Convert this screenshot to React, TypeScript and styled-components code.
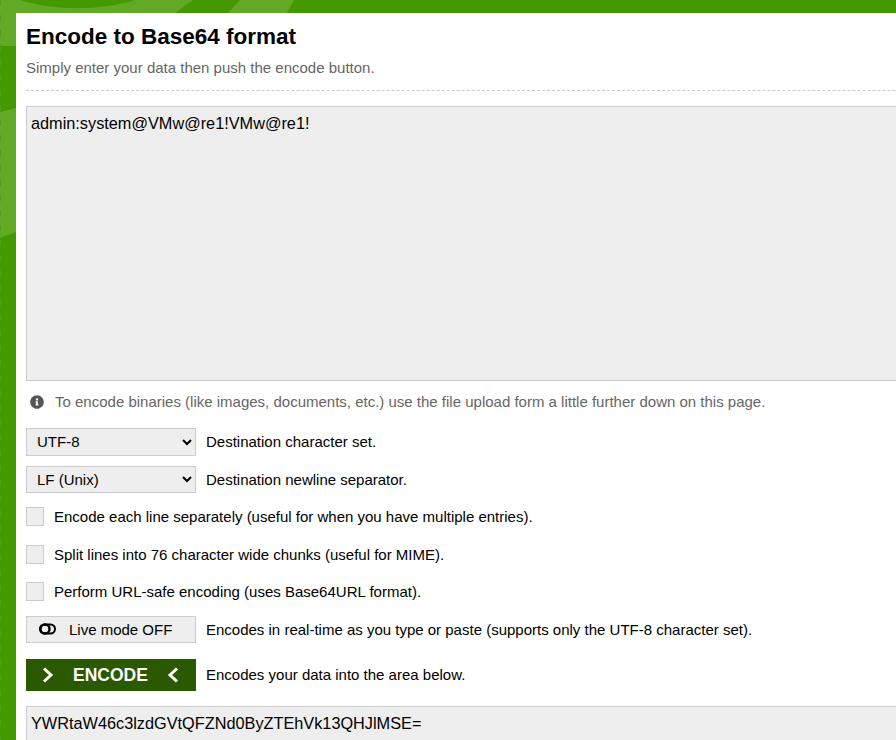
import React from "react";
import styled, { createGlobalStyle } from "styled-components";
import { FaInfoCircle } from "react-icons/fa";

const GlobalStyle = createGlobalStyle`
  html {
    background: #429900;
  }

  html, body {
    margin: 0;
    height: 740px;
    overflow: hidden;
    font-family: "Liberation Sans", Arial, sans-serif;
    color: #000;
  }
`;

const Backdrop = styled.svg`
  position: fixed;
  top: 0;
  left: 0;
  z-index: -1;
`;

const Panel = styled.main`
  width: 1100px;
  height: 800px;
  margin: 13px 0 0 16px;
  padding: 0 10px;
  background: #fff;
`;

const Title = styled.h1`
  margin: 0;
  padding-top: 9px;
  font-size: 22.5px;
  line-height: 30px;
  font-weight: 700;
`;

const Subtitle = styled.p`
  margin: 6px 0 0;
  font-size: 15px;
  line-height: 20px;
  color: #666;
`;

const Divider = styled.hr`
  margin: 12px 0 15px;
  border: 0;
  border-top: 1px dashed #ccc;
`;

const DataArea = styled.textarea<{ $height: number }>`
  display: block;
  width: 100%;
  height: ${(p) => p.$height}px;
  box-sizing: border-box;
  padding: 5px 4px;
  border: 1px solid #ccc;
  border-radius: 0;
  background: #eee;
  color: #000;
  font: 16.3px/22px "Liberation Sans", Arial, sans-serif;
  outline: none;
  resize: none;
  overflow: hidden;
`;

const Note = styled.p`
  display: flex;
  align-items: center;
  height: 19px;
  margin: 11px 0 17px;
  padding-left: 4px;
  font-size: 15px;
  color: #666;

  svg {
    width: 14px;
    height: 14px;
    margin-right: 11px;
    color: #555;
  }
`;

const Options = styled.div`
  display: flex;
  flex-direction: column;
  gap: 10px;
`;

const Row = styled.div`
  display: flex;
  align-items: center;
  height: 27.5px;
  font-size: 15px;
`;

const EncodeRow = styled(Row)`
  height: 32px;
  margin-top: 16px;
  margin-bottom: 15px;
`;

const EncodeHint = styled.span`
  margin-top: -2px;
`;

const Select = styled.select`
  width: 170px;
  height: 100%;
  box-sizing: border-box;
  margin: 0 10px 0 0;
  padding: 0 6px;
  border: 1px solid #ccc;
  border-radius: 0;
  background: #eee;
  color: #000;
  font: 15px "Liberation Sans", Arial, sans-serif;
`;

const CheckLabel = styled.label`
  display: flex;
  align-items: center;
`;

const Checkbox = styled.input.attrs({ type: "checkbox" })`
  appearance: none;
  width: 18px;
  height: 19px;
  box-sizing: border-box;
  margin: 0 10px 0 0;
  border: 1px solid #ccc;
  background: #eee;
`;

const LiveButton = styled.button`
  display: flex;
  align-items: center;
  gap: 13px;
  width: 170px;
  height: 100%;
  box-sizing: border-box;
  margin-right: 10px;
  padding: 0 0 0 12px;
  border: 1px solid #ccc;
  background: #eee;
  color: #000;
  font: 15px "Liberation Sans", Arial, sans-serif;
`;

const EncodeButton = styled.button`
  display: flex;
  align-items: center;
  justify-content: space-between;
  width: 170px;
  height: 100%;
  box-sizing: border-box;
  margin-right: 10px;
  padding: 0 17px 0 16px;
  border: 0;
  background: #2b5900;
  color: #fff;
  font: 700 17.5px "Liberation Sans", Arial, sans-serif;
`;

const ToggleIcon = () => (
  <svg width="17" height="12" viewBox="0 0 17 12" fill="none" stroke="#000" strokeWidth="2">
    <rect x="1" y="1.5" width="15" height="9" rx="4.5" />
    <circle cx="6" cy="6" r="4.5" strokeWidth="2.4" />
  </svg>
);

const Chevron = ({ left }: { left?: boolean }) => (
  <svg width="12" height="16" viewBox="0 0 12 16" fill="none" stroke="#fff" strokeWidth="3">
    <path d={left ? "M10 1.5 3 8 10 14.5" : "M2 1.5 9 8 2 14.5"} />
  </svg>
);

const checks = [
  "Encode each line separately (useful for when you have multiple entries).",
  "Split lines into 76 character wide chunks (useful for MIME).",
  "Perform URL-safe encoding (uses Base64URL format).",
];

const App: React.FC = () => {
  return (
    <>
      <GlobalStyle />
      <Backdrop width="896" height="740" viewBox="0 0 896 740">
        <path
          d="M0 0H20C55 11 100 11 135 0H193L175 13H16V46H0Z"
          fill="#62a926"
        />
        <path d="M0 112 16 108V232L0 238Z" fill="#62a926" />
        <path d="M240 0H294L287 13H228Z" fill="#62a926" />
        <path d="M.5 0V740" stroke="#4f9f12" strokeWidth="1" strokeDasharray="6 9" />
      </Backdrop>
      <Panel>
        <Title>Encode to Base64 format</Title>
        <Subtitle>Simply enter your data then push the encode button.</Subtitle>
        <Divider />
        <DataArea $height={275} readOnly value="admin:system@VMw@re1!VMw@re1!" />
        <Note>
          <FaInfoCircle />
          To encode binaries (like images, documents, etc.) use the file upload form a little
          further down on this page.
        </Note>
        <Options>
          <Row>
            <Select defaultValue="UTF-8">
              <option>UTF-8</option>
            </Select>
            Destination character set.
          </Row>
          <Row>
            <Select defaultValue="LF (Unix)">
              <option>LF (Unix)</option>
            </Select>
            Destination newline separator.
          </Row>
          {checks.map((text) => (
            <Row key={text}>
              <CheckLabel>
                <Checkbox />
                {text}
              </CheckLabel>
            </Row>
          ))}
          <Row>
            <LiveButton>
              <ToggleIcon />
              Live mode OFF
            </LiveButton>
            Encodes in real-time as you type or paste (supports only the UTF-8 character set).
          </Row>
        </Options>
        <EncodeRow>
          <EncodeButton>
            <Chevron />
            ENCODE
            <Chevron left />
          </EncodeButton>
          <EncodeHint>Encodes your data into the area below.</EncodeHint>
        </EncodeRow>
        <DataArea $height={120} readOnly value="YWRtaW46c3lzdGVtQFZNd0ByZTEhVk13QHJlMSE=" />
      </Panel>
    </>
  );
};

export default App;
